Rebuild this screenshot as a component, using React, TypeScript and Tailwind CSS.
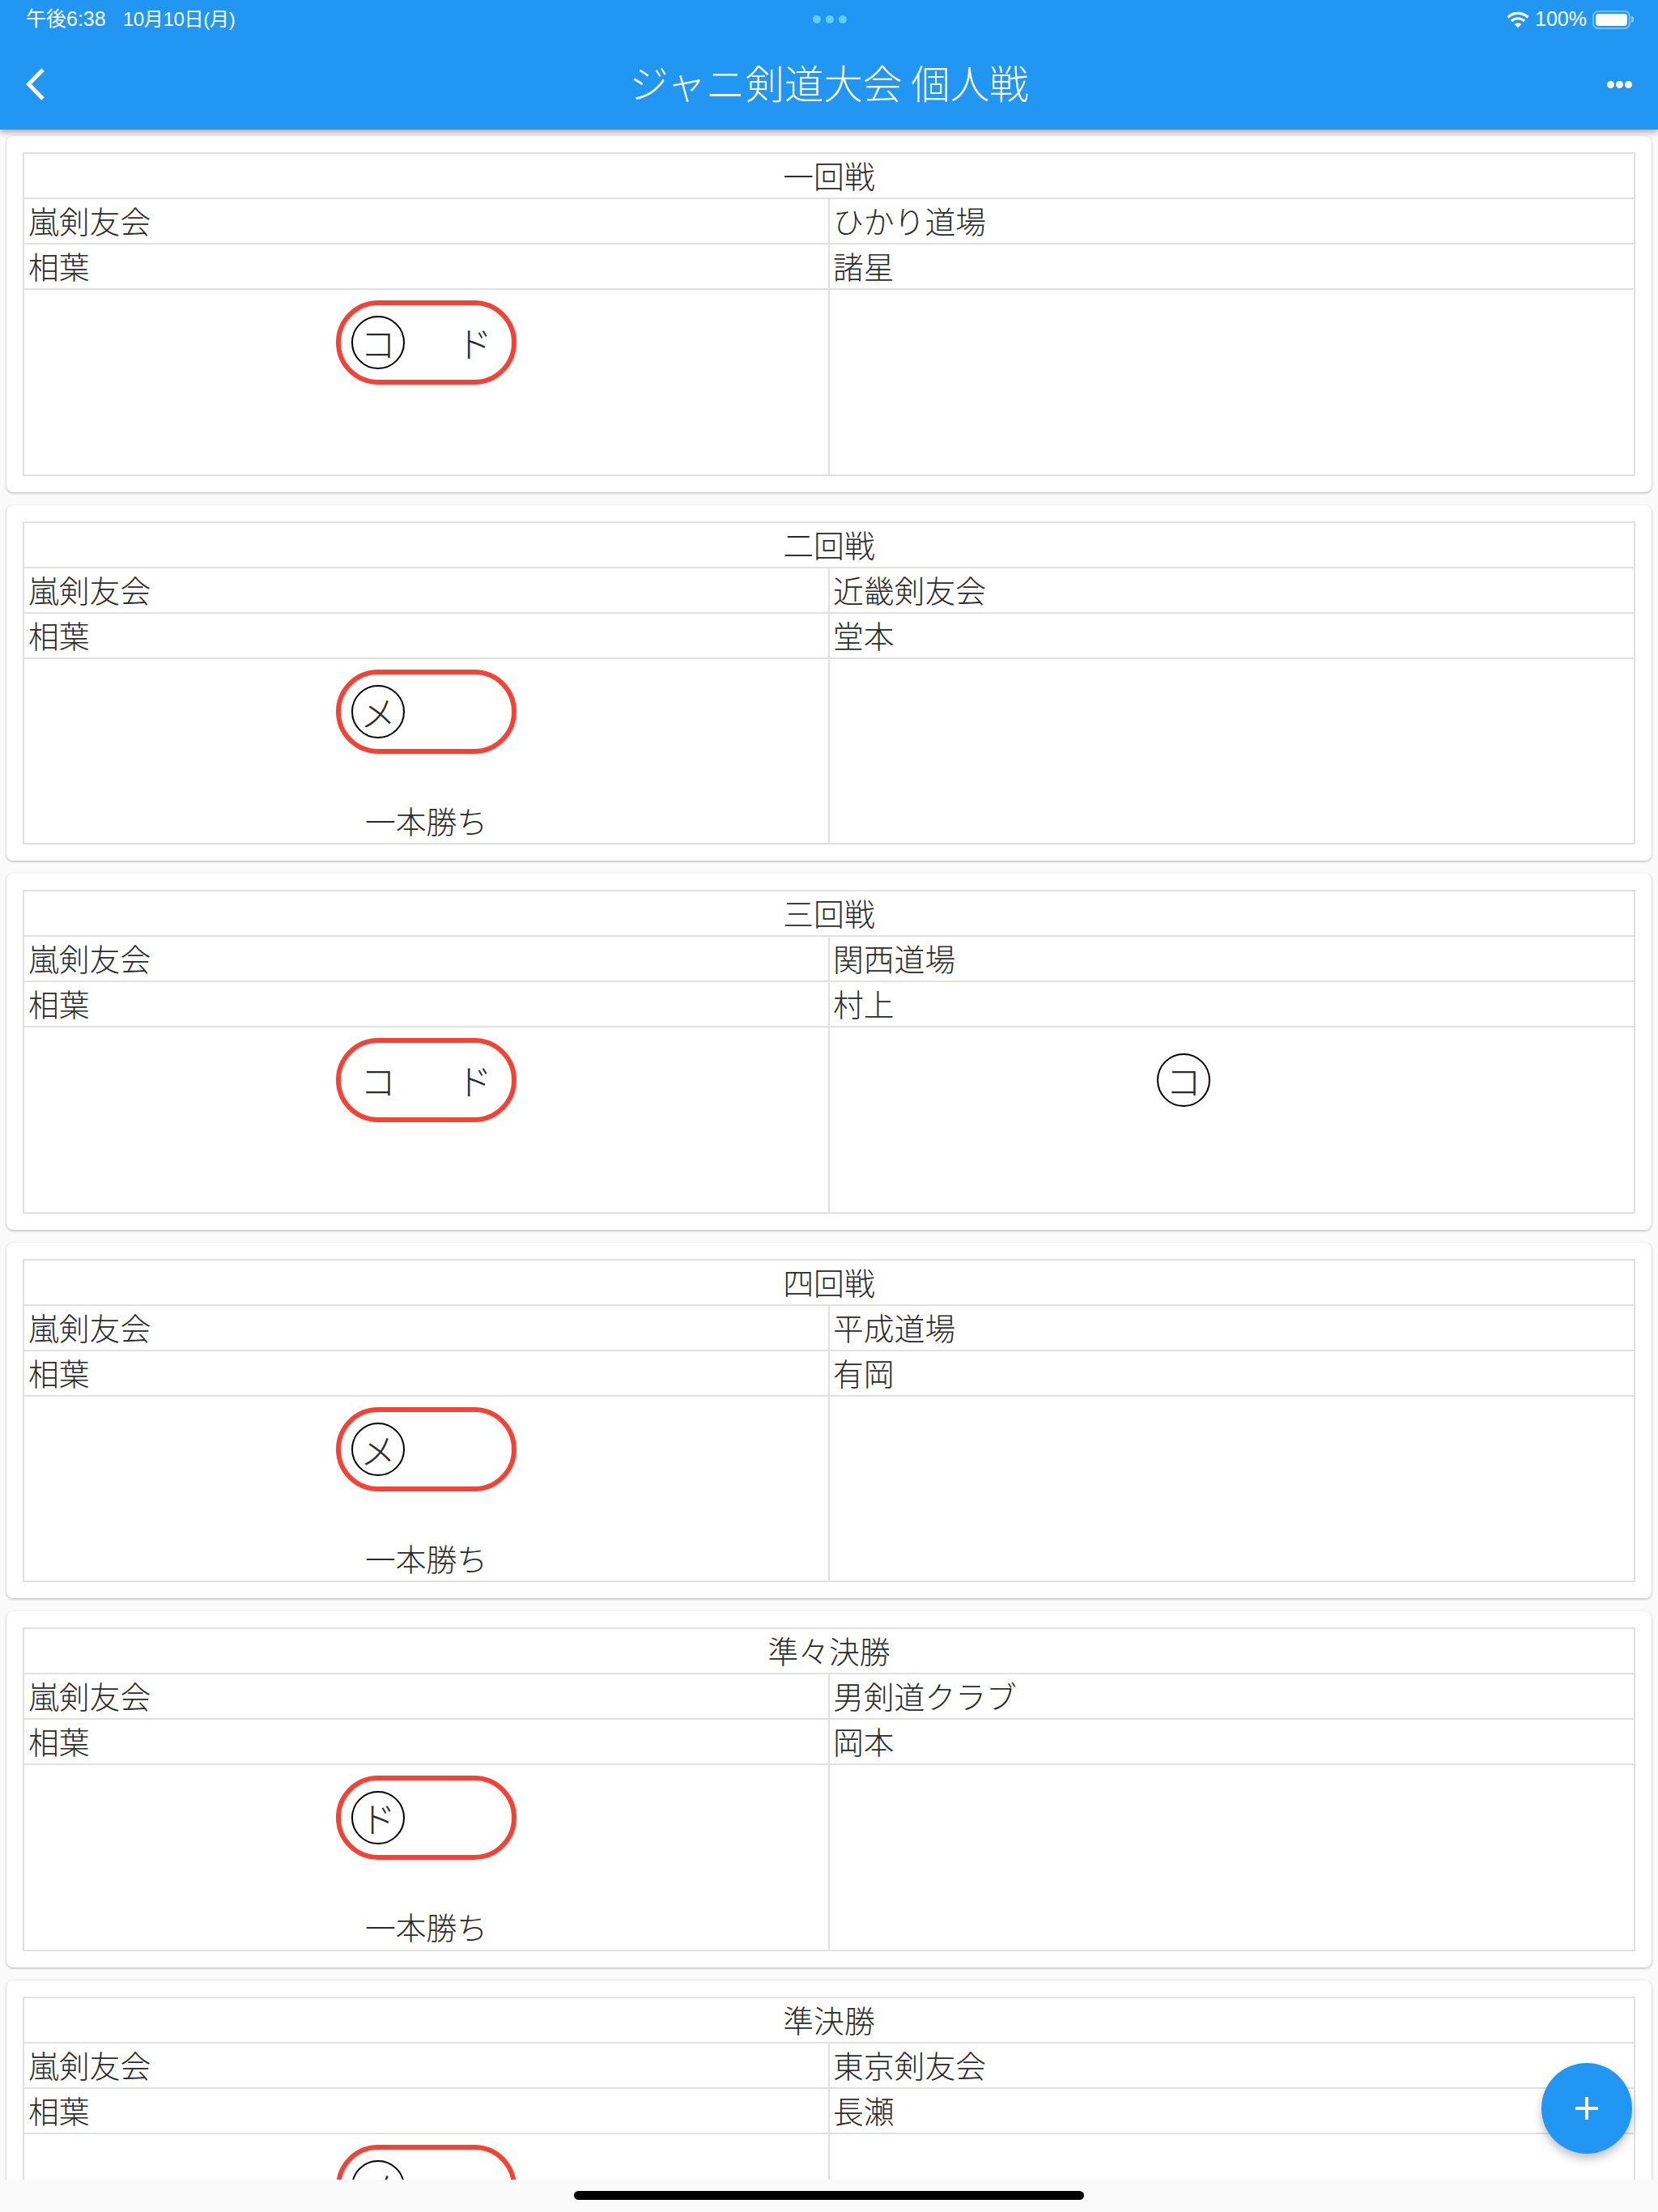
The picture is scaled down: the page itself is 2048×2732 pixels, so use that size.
type Match = {
  round: string;
  left: { team: string; player: string };
  right: { team: string; player: string };
  marks: [string, string];
  circled: boolean;
  rightMark?: string;
  note?: string;
};

const matches: Match[] = [
  { round: '一回戦', left: { team: '嵐剣友会', player: '相葉' }, right: { team: 'ひかり道場', player: '諸星' }, marks: ['コ', 'ド'], circled: true },
  { round: '二回戦', left: { team: '嵐剣友会', player: '相葉' }, right: { team: '近畿剣友会', player: '堂本' }, marks: ['メ', ''], circled: true, note: '一本勝ち' },
  { round: '三回戦', left: { team: '嵐剣友会', player: '相葉' }, right: { team: '関西道場', player: '村上' }, marks: ['コ', 'ド'], circled: false, rightMark: 'コ' },
  { round: '四回戦', left: { team: '嵐剣友会', player: '相葉' }, right: { team: '平成道場', player: '有岡' }, marks: ['メ', ''], circled: true, note: '一本勝ち' },
  { round: '準々決勝', left: { team: '嵐剣友会', player: '相葉' }, right: { team: '男剣道クラブ', player: '岡本' }, marks: ['ド', ''], circled: true, note: '一本勝ち' },
  { round: '準決勝', left: { team: '嵐剣友会', player: '相葉' }, right: { team: '東京剣友会', player: '長瀬' }, marks: ['メ', ''], circled: true },
];

function Mark({ text, circled }: { text: string; circled?: boolean }) {
  return (
    <div className={`w-[66px] h-[66px] rounded-full flex items-center justify-center text-[44px] leading-none ${circled ? 'border-2 border-black' : ''}`}>
      {text}
    </div>
  );
}

function MatchCard({ match }: { match: Match }) {
  return (
    <div className="bg-white rounded-[8px] shadow-[0_1px_3px_rgba(0,0,0,0.3)] px-5 pt-5 pb-5 mb-4 shrink-0">
      <div className="border-2 border-[#e0e0e0] text-[37.8px] leading-[52px] text-[#2b2b2b]">
        {/* Round */}
        <div className="h-[56px] text-center border-b-2 border-[#e0e0e0]">{match.round}</div>
        {/* Team */}
        <div className="grid grid-cols-[993px_1fr] h-[56px] border-b-2 border-[#e0e0e0]">
          <div className="pl-[5px]">{match.left.team}</div>
          <div className="pl-[4px] border-l-2 border-[#e0e0e0]">{match.right.team}</div>
        </div>
        {/* Player */}
        <div className="grid grid-cols-[993px_1fr] h-[56px] border-b-2 border-[#e0e0e0]">
          <div className="pl-[5px]">{match.left.player}</div>
          <div className="pl-[4px] border-l-2 border-[#e0e0e0]">{match.right.player}</div>
        </div>
        {/* Score */}
        <div className="grid grid-cols-[993px_1fr] h-[227.6px]">
          <div className="flex flex-col items-center pt-[13px]">
            <div className="w-[223px] h-[104px] rounded-[52px] border-[6px] border-[#f44336] flex items-center justify-between px-[13px]">
              <Mark text={match.marks[0]} circled={match.circled} />
              <Mark text={match.marks[1]} />
            </div>
            {match.note && <div className="mt-[56px]">{match.note}</div>}
          </div>
          <div className="border-l-2 border-[#e0e0e0] flex flex-col items-center pt-[13px]">
            {/* same slot as the left pill, no outline */}
            <div className="w-[223px] h-[104px] border-[6px] border-transparent flex items-center px-[13px]">
              {match.rightMark && <Mark text={match.rightMark} circled />}
            </div>
          </div>
        </div>
      </div>
    </div>
  );
}

export default function App() {
  return (
    <div className="relative w-[2048px] h-[2732px] overflow-hidden bg-[#fafafa] font-['Noto_Sans_CJK_JP','Noto_Sans',sans-serif] font-light">
      {/* Header */}
      <div className="relative z-10 h-[160px] bg-[#2196f3] text-white shadow-[0_3px_8px_rgba(0,0,0,0.35)]">
        <div className="h-[48px] pl-[32px] pr-[30px] grid grid-cols-[1fr_auto_1fr] items-center font-['Liberation_Sans','Noto_Sans_CJK_JP',sans-serif] text-[25px] font-normal">
          <div className="flex items-center gap-[21px]">
            <span>午後6:38</span>
            <span className="text-[24px] tracking-[-0.3px]">10月10日(月)</span>
          </div>
          <div className="flex gap-[6px]">
            <span className="w-[10px] h-[10px] rounded-full bg-[#5fcfff]" />
            <span className="w-[10px] h-[10px] rounded-full bg-[#5fcfff]" />
            <span className="w-[10px] h-[10px] rounded-full bg-[#5fcfff]" />
          </div>
          <div className="flex items-center justify-end gap-[7px]">
            <svg width="28" height="21" viewBox="0 0 28 21" fill="none" stroke="white" strokeWidth="3.2">
              <path d="M1.5 7.5a18 18 0 0 1 25 0" />
              <path d="M6 12a11.5 11.5 0 0 1 16 0" />
              <path d="M14 20.5l-4.2-4.6a6 6 0 0 1 8.4 0z" fill="white" stroke="none" />
            </svg>
            <span>100%</span>
            <div className="flex items-center">
              <div className="w-[47px] h-[23px] rounded-[7px] border-2 border-white/40 p-[2px]">
                <div className="w-full h-full rounded-[4px] bg-white" />
              </div>
              <div className="w-[3px] h-[8px] ml-[1px] rounded-r-full bg-white/50" />
            </div>
          </div>
        </div>
        <div className="h-[112px] grid grid-cols-[1fr_auto_1fr] items-center pl-[32px] pr-[32px]">
          <svg width="24" height="40" viewBox="0 0 24 40" fill="none" stroke="white" strokeWidth="5" strokeLinejoin="miter">
            <path d="M21 2 L3.5 20 L21 38" />
          </svg>
          <div className="mb-[5px] text-[48.5px] leading-none">ジャニ剣道大会 個人戦</div>
          <div className="flex justify-end gap-[2px]">
            <span className="w-[9px] h-[9px] rounded-full bg-white" />
            <span className="w-[9px] h-[9px] rounded-full bg-white" />
            <span className="w-[9px] h-[9px] rounded-full bg-white" />
          </div>
        </div>
      </div>

      {/* List */}
      <div className="h-[2532px] overflow-hidden px-2 pt-2 flex flex-col">
        {matches.map((m) => (
          <MatchCard key={m.round} match={m} />
        ))}
      </div>

      {/* Home indicator */}
      <div className="h-[40px] bg-[#fafafa] flex justify-center pt-[14px]">
        <div className="w-[630px] h-[11px] rounded-full bg-black" />
      </div>

      {/* Add button */}
      <button className="absolute left-[1904px] top-[2548px] w-[112px] h-[112px] rounded-full bg-[#2196f3] shadow-[0_6px_12px_rgba(0,0,0,0.25)] flex items-center justify-center">
        <svg width="28" height="28" viewBox="0 0 28 28" fill="white">
          <rect x="12" y="0" width="4" height="28" />
          <rect x="0" y="12" width="28" height="4" />
        </svg>
      </button>
    </div>
  );
}
